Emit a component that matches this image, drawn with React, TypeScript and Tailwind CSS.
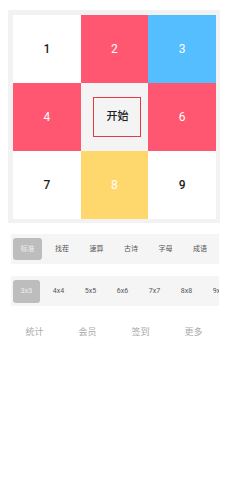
import React, { useState } from 'react';

const CELLS = [
  { n: '1', bg: 'bg-white', fg: 'text-[#222] font-medium' },
  { n: '2', bg: 'bg-[#ff5771]', fg: 'text-white' },
  { n: '3', bg: 'bg-[#55befe]', fg: 'text-white' },
  { n: '4', bg: 'bg-[#ff5771]', fg: 'text-white' },
  { n: 'start', bg: 'bg-[#f4f4f4]', fg: 'text-[#222]' },
  { n: '6', bg: 'bg-[#ff5771]', fg: 'text-white' },
  { n: '7', bg: 'bg-white', fg: 'text-[#222] font-medium' },
  { n: '8', bg: 'bg-[#ffd86d]', fg: 'text-white' },
  { n: '9', bg: 'bg-white', fg: 'text-[#222] font-medium' },
];

const MODES = ['标准', '找茬', '速算', '古诗', '字母', '成语'];
const SIZES = ['3x3', '4x4', '5x5', '6x6', '7x7', '8x8', '9x9'];
const NAV = ['统计', '会员', '签到', '更多'];

export default function App() {
  const [mode, setMode] = useState(0);
  const [size, setSize] = useState(0);

  return (
    <div className="h-[480px] w-[229px] overflow-hidden bg-white font-['Roboto','Noto_Sans_CJK_SC',sans-serif]">
      <div className="ml-2 mt-[10px] w-[212px] bg-[#f2f2f2] pb-[4px] pl-[5px] pr-[4px] pt-[5px]">
        <div className="grid grid-cols-3 grid-rows-[68px_68px_68px]">
          {CELLS.map((c) =>
            c.n === 'start' ? (
              <div key={c.n} className={`flex items-center justify-center pl-[6px] ${c.bg}`}>
                <button className="flex h-[40px] w-[48px] items-center justify-center border border-[#e53945] text-[11px] font-medium text-[#222]">
                  开始
                </button>
              </div>
            ) : (
              <div key={c.n} className={`flex items-center justify-center text-[12px] ${c.bg} ${c.fg}`}>
                {c.n}
              </div>
            )
          )}
        </div>
      </div>

      <div className="ml-[11px] mt-[11px] flex h-[30px] w-[208px] items-center overflow-hidden bg-[#f5f5f5] px-[2px]">
        {MODES.map((m, i) => (
          <button
            key={m}
            onClick={() => setMode(i)}
            className={`flex h-[22px] w-[29px] shrink-0 items-center justify-center rounded-[3px] text-[7px] ${
              i === mode ? 'bg-[#bdbdbd] text-[#f0f0f0]' : 'text-[#555]'
            } ${i === 0 ? '' : 'ml-[5.5px]'}`}
          >
            {m}
          </button>
        ))}
      </div>

      <div className="ml-[11px] mt-[12px] flex h-[30px] w-[208px] items-center overflow-hidden bg-[#f5f5f5] px-[2px]">
        {SIZES.map((s, i) => (
          <button
            key={s}
            onClick={() => setSize(i)}
            className={`flex h-[23px] w-[27px] shrink-0 items-center justify-center rounded-[3px] text-[7px] ${
              i === size ? 'bg-[#bdbdbd] text-[#f0f0f0]' : 'text-[#555]'
            } ${i === 0 ? '' : 'ml-[5px]'}`}
          >
            {s}
          </button>
        ))}
      </div>

      <div className="ml-2 mt-[20px] grid w-[212px] grid-cols-4">
        {NAV.map((t) => (
          <div key={t} className="text-center text-[9px] leading-[12px] text-[#aaa]">
            {t}
          </div>
        ))}
      </div>
    </div>
  );
}
